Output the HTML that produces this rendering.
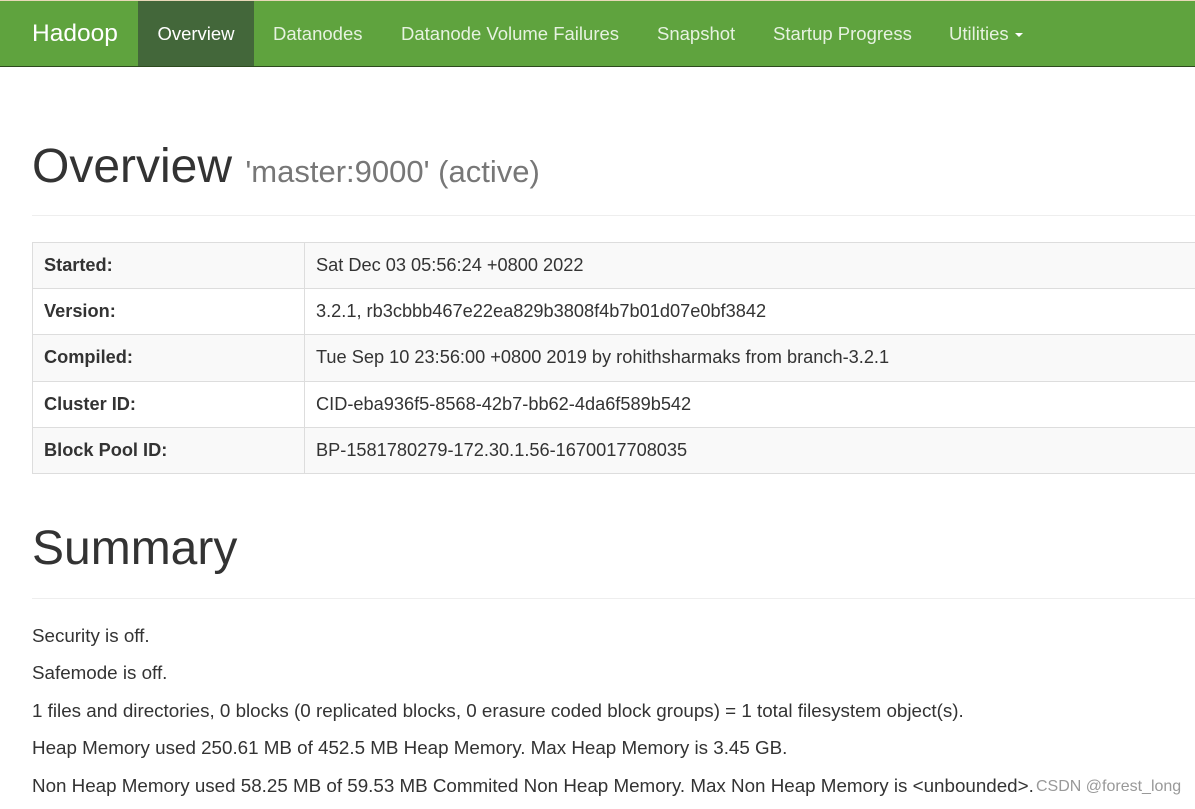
<!DOCTYPE html>
<html><head><meta charset="utf-8"><style>
body{margin:0;background:#fff;font-family:"Liberation Sans",sans-serif;color:#333;width:1195px;height:809px;overflow:hidden;position:relative}
.nav{position:absolute;left:0;top:0;width:1195px;height:67px;background:#5fa33e;border-bottom:1px solid #2d4a1e;border-top:1px solid #e8d8b8;box-sizing:border-box}
.nav span{position:absolute;top:0;height:65px;line-height:66px;color:#e6f2e0;font-size:18.5px}
.brand{left:32px;font-size:24.5px!important;color:#fff!important}
.act{left:138px;width:116px;background:#43673a;text-align:center;color:#fff!important}
.car{display:inline-block;border-left:4px solid transparent;border-right:4px solid transparent;border-top:4px solid #fff;vertical-align:middle;margin-left:6px}
h1{position:absolute;margin:0;font-weight:normal;color:#333}
.hr{position:absolute;left:32px;width:1163px;height:1px;background:#eee}
table{position:absolute;left:32px;top:242px;width:1170px;border-collapse:collapse;font-size:18.2px}
td{border:1px solid #ddd;height:46.2px;padding:0 11px;box-sizing:border-box}
tr:nth-child(odd){background:#f9f9f9}
td:first-child{width:272px;font-weight:bold}
p{position:absolute;left:32px;margin:0;font-size:18.8px}
.wm{position:absolute;left:1036px;top:778px;color:#999;font-size:16px}
</style></head><body>
<div class="nav">
<span class="brand">Hadoop</span>
<span class="act">Overview</span>
<span style="left:273px">Datanodes</span>
<span style="left:401px">Datanode Volume Failures</span>
<span style="left:657px">Snapshot</span>
<span style="left:773px">Startup Progress</span>
<span style="left:949px">Utilities<i class="car"></i></span>
</div>
<h1 style="left:32px;top:139px;font-size:48px">Overview <small style="font-size:31px;color:#777">'master:9000' (active)</small></h1>
<div class="hr" style="top:215px"></div>
<table>
<tr><td>Started:</td><td>Sat Dec 03 05:56:24 +0800 2022</td></tr>
<tr><td>Version:</td><td>3.2.1, rb3cbbb467e22ea829b3808f4b7b01d07e0bf3842</td></tr>
<tr><td>Compiled:</td><td>Tue Sep 10 23:56:00 +0800 2019 by rohithsharmaks from branch-3.2.1</td></tr>
<tr><td>Cluster ID:</td><td>CID-eba936f5-8568-42b7-bb62-4da6f589b542</td></tr>
<tr><td>Block Pool ID:</td><td>BP-1581780279-172.30.1.56-1670017708035</td></tr>
</table>
<h1 style="left:32px;top:521px;font-size:48px">Summary</h1>
<div class="hr" style="top:598px"></div>
<p style="top:625px">Security is off.</p>
<p style="top:662px">Safemode is off.</p>
<p style="top:700px">1 files and directories, 0 blocks (0 replicated blocks, 0 erasure coded block groups) = 1 total filesystem object(s).</p>
<p style="top:737px">Heap Memory used 250.61 MB of 452.5 MB Heap Memory. Max Heap Memory is 3.45 GB.</p>
<p style="top:775px">Non Heap Memory used 58.25 MB of 59.53 MB Commited Non Heap Memory. Max Non Heap Memory is &lt;unbounded&gt;.</p>
<div class="wm">CSDN @forest_long</div>
</body></html>
